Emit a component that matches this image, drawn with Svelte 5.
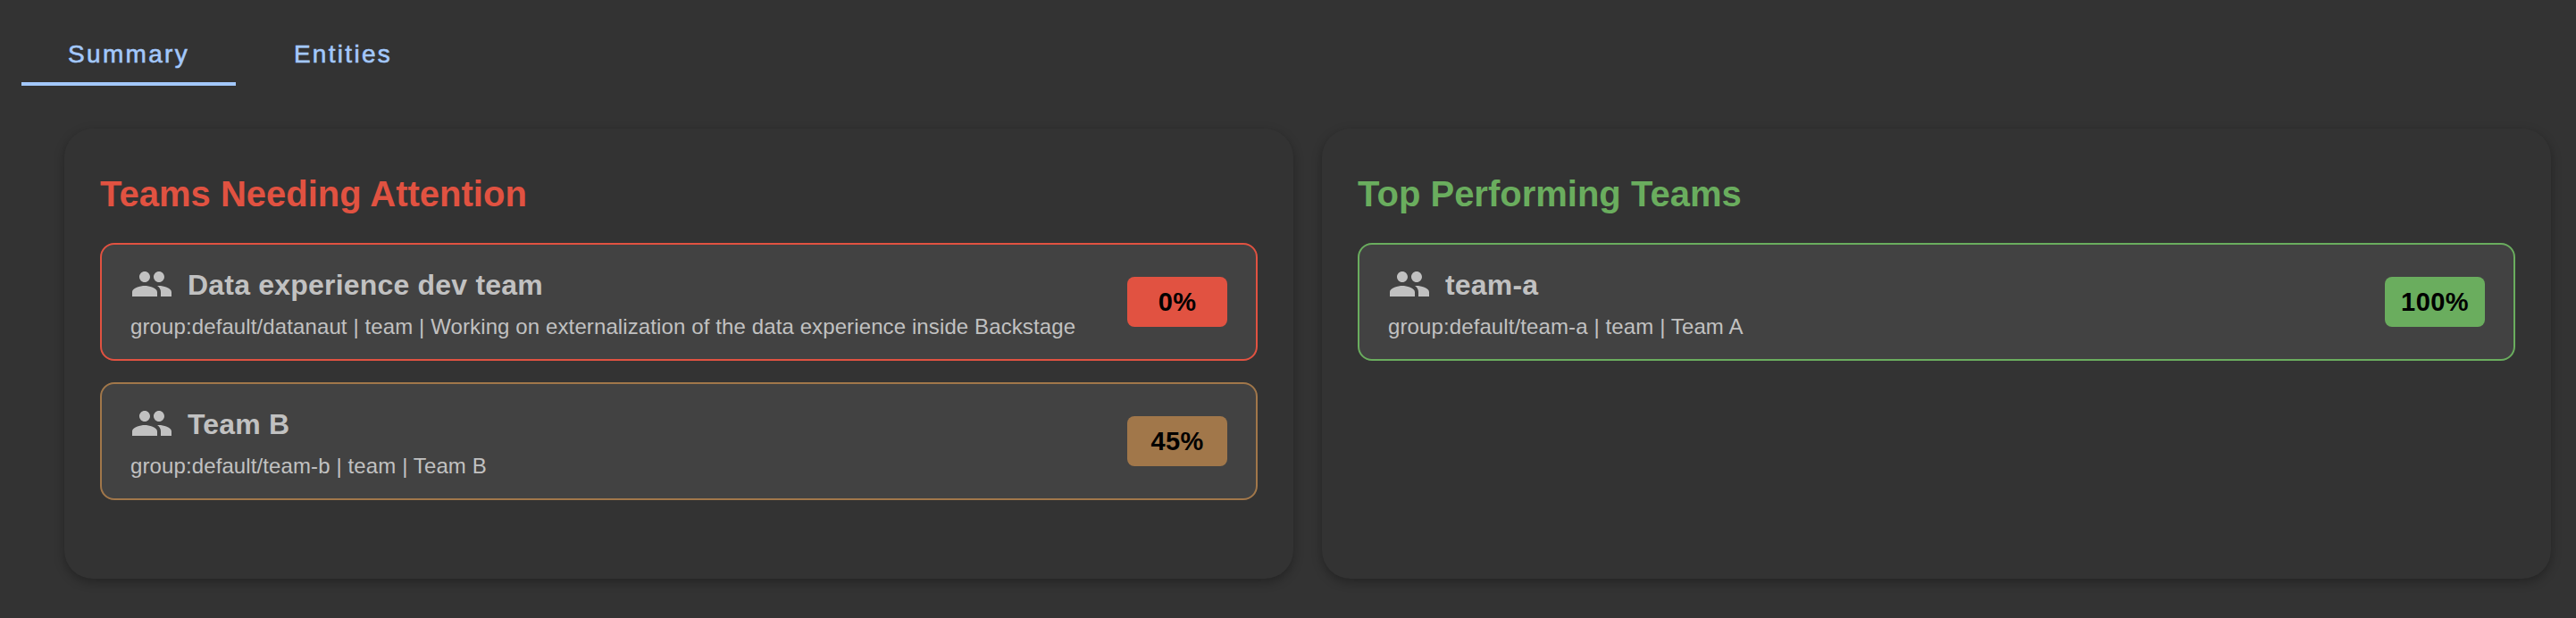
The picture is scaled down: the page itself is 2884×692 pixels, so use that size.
<script>
  let activeTab = "Summary";
  const tabs = ["Summary", "Entities"];

  // Teams grouped by how well they score
  const sections = [
    {
      title: "Teams Needing Attention",
      tone: "red",
      teams: [
        {
          name: "Data experience dev team",
          details: "group:default/datanaut | team | Working on externalization of the data experience inside Backstage",
          score: 0,
          tone: "red",
        },
        {
          name: "Team B",
          details: "group:default/team-b | team | Team B",
          score: 45,
          tone: "brown",
        },
      ],
    },
    {
      title: "Top Performing Teams",
      tone: "green",
      teams: [
        {
          name: "team-a",
          details: "group:default/team-a | team | Team A",
          score: 100,
          tone: "green",
        },
      ],
    },
  ];
</script>

<div class="page">
  <nav class="tabs">
    {#each tabs as tab}
      <button class="tab" class:active={tab === activeTab} on:click={() => (activeTab = tab)}>{tab}</button>
    {/each}
  </nav>

  <main class="sections">
    {#each sections as section}
      <section class="card {section.tone}">
        <h2>{section.title}</h2>
        <div class="teams">
          {#each section.teams as team}
            <div class="team {team.tone}">
              <div class="info">
                <div class="name">
                  <svg viewBox="0 0 24 24" aria-hidden="true">
                    <path
                      d="M16 11c1.66 0 2.99-1.34 2.99-3S17.66 5 16 5c-1.66 0-3 1.34-3 3s1.34 3 3 3zm-8 0c1.66 0 2.99-1.34 2.99-3S9.66 5 8 5C6.34 5 5 6.34 5 8s1.34 3 3 3zm0 2c-2.33 0-7 1.17-7 3.5V19h14v-2.5c0-2.33-4.67-3.5-7-3.5zm8 0c-.29 0-.62.02-.97.05 1.16.84 1.97 1.97 1.97 3.45V19h6v-2.5c0-2.33-4.67-3.5-7-3.5z"
                    />
                  </svg>
                  <h3>{team.name}</h3>
                </div>
                <p class="details">{team.details}</p>
              </div>
              <span class="score">{team.score}%</span>
            </div>
          {/each}
        </div>
      </section>
    {/each}
  </main>
</div>

<style>
  :global(body) {
    background: #333333;
  }

  .page {
    box-sizing: border-box;
    height: 692px;
    overflow: hidden;
    background: #333333;
    font-family: "Helvetica Neue", "Liberation Sans", Arial, sans-serif;
  }

  .tabs {
    display: flex;
    height: 96px;
    padding-left: 24px;
  }
  .tab {
    box-sizing: border-box;
    width: 240px;
    padding: 29px 0 0;
    border: none;
    border-bottom: 4px solid transparent;
    background: none;
    color: #a3c8fb;
    font-family: inherit;
    font-size: 28px;
    line-height: 32px;
    letter-spacing: 2.3px;
    -webkit-text-stroke: 0.6px #a3c8fb;
    cursor: pointer;
  }
  .tab.active {
    border-bottom-color: #a3c8fb;
  }

  .sections {
    display: grid;
    grid-template-columns: 1fr 1fr;
    gap: 32px;
    padding: 48px 28px 0 72px;
  }
  .card {
    box-sizing: border-box;
    height: 504px;
    padding: 49px 40px 40px;
    border-radius: 32px;
    background: #333333;
    box-shadow: 0 4px 12px rgba(0, 0, 0, 0.3);
  }
  .red {
    --tone: #e15241;
  }
  .brown {
    --tone: #a1774a;
  }
  .green {
    --tone: #6aad5e;
  }

  h2 {
    margin: 0 0 31px;
    color: var(--tone);
    font-size: 40px;
    line-height: 48px;
    white-space: nowrap;
  }

  .teams {
    display: flex;
    flex-direction: column;
    gap: 24px;
  }
  .team {
    box-sizing: border-box;
    display: flex;
    align-items: center;
    justify-content: space-between;
    height: 132px;
    padding: 0 32px;
    border: 2px solid var(--tone);
    border-radius: 16px;
    background: #424242;
    color: #c1c1c1;
  }
  .name {
    display: flex;
    align-items: center;
    gap: 16px;
    height: 48px;
    margin-top: 2px;
  }
  .name svg {
    width: 48px;
    height: 48px;
    fill: currentColor;
  }
  h3 {
    margin: 0;
    padding-top: 2px;
    font-size: 32px;
    line-height: 48px;
    letter-spacing: 0.2px;
  }
  .details {
    margin: 6px 0 0;
    font-size: 24px;
    line-height: 36px;
    letter-spacing: 0.11px;
    white-space: nowrap;
  }
  .score {
    width: 112px;
    border-radius: 8px;
    background: var(--tone);
    color: #000;
    font-size: 29px;
    font-weight: bold;
    line-height: 56px;
    letter-spacing: 0.4px;
    text-align: center;
  }
</style>
